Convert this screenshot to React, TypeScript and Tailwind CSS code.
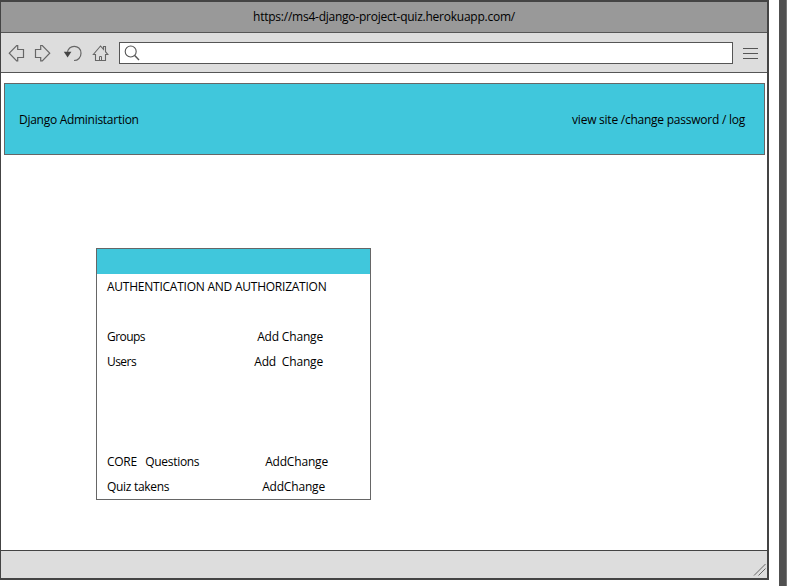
import React from "react";

const stroke = { fill: "none", stroke: "#666", strokeWidth: 1 };

function Row({ label, actions, pad }: { label: string; actions: string; pad: string }) {
  return (
    <div className={`flex h-[25px] items-center justify-between whitespace-pre pl-[10px] ${pad}`}>
      <span className={label.length < 7 ? "tracking-[-0.55px]" : "tracking-[-0.3px]"}>{label}</span>
      <span className="tracking-[-0.18px]">{actions}</span>
    </div>
  );
}

function Toolbar() {
  return (
    <div className="flex h-10 shrink-0 items-center border-b border-[#555] bg-[#ddd]">
      <svg className="h-[39px] w-[118px] shrink-0" viewBox="1 33 118 39" {...stroke}>
        <path d="M9.3 53.2 L16.7 45.5 H17.7 V49.5 H23.5 V57.5 H17.7 V60.8 H16.7 Z" strokeWidth="1.2" />
        <path d="M49.7 53.2 L42.3 45.5 H40.7 V49.5 H35.5 V57.5 H40.7 V60.8 H42.3 Z" strokeWidth="1.2" />
        <path d="M67.5 53.2 C67.5 44 81 44 81 53.2 C81 57.5 78 60.5 74 60.5" strokeWidth="1.2" />
        <path d="M63.8 51.8 H71.4 L67.6 57.4 Z" fill="#444" stroke="none" />
        <path d="M93.3 54.5 L100.5 46 L103.5 49.4 V46.5 H105.5 V51.7 L107.8 54.5 H105.5 V60.5 H95.5 V54.5 Z" strokeWidth="1.1" />
        <path d="M99.5 60.5 V56.5 H101.5 V60.5" />
      </svg>
      <div className="flex h-[22px] w-[614px] items-center border border-[#555] bg-white pl-[4px]">
        <svg className="size-[18px]" viewBox="0 0 18 18" {...stroke} stroke="#555">
          <circle cx="6.7" cy="7.5" r="5.5" strokeWidth="1.1" />
          <path d="M10.7 11.5 L15 16" strokeWidth="1.4" />
        </svg>
      </div>
      <div className="ml-[10px] mt-[2px] flex w-[15px] flex-col gap-1">
        <div className="h-px bg-[#555]" />
        <div className="h-px bg-[#555]" />
        <div className="h-px bg-[#555]" />
      </div>
    </div>
  );
}

export default function App() {
  return (
    <div className="flex h-[586px] w-[787px] justify-between overflow-hidden bg-white font-['Open_Sans','Noto_Sans',sans-serif] text-[12px] leading-[16px] tracking-[-0.24px] text-black">
      <div className="flex h-[580px] w-[769px] flex-col border-2 border-l border-[#444]">
        <div className="flex h-[31px] shrink-0 items-center justify-center border-b border-[#555] bg-[#999]">
          <span>https://ms4-django-project-quiz.herokuapp.com/</span>
        </div>
        <Toolbar />
        <main className="flex-1 pl-[3px] pt-[10px]">
          <header className="flex h-[72px] w-[761px] items-center justify-between border border-[#666] bg-[#40c7dc] pl-[14px] pr-[19px] pt-[2px]">
            <span className="tracking-[-0.28px]">Django Administartion</span>
            <span>view site /change password / log</span>
          </header>
          <section className="ml-[92px] mt-[93px] h-[252px] w-[275px] border border-[#666]">
            <div className="h-[25px] bg-[#40c7dc]" />
            <div className="flex h-[25px] items-center pl-[10px]">
              <span>AUTHENTICATION AND AUTHORIZATION</span>
            </div>
            <div className="h-[25px]" />
            <Row label="Groups" actions="Add Change" pad="pr-[47px]" />
            <Row label="Users" actions="Add  Change" pad="pr-[47px]" />
            <div className="h-[75px]" />
            <Row label="CORE   Questions" actions="AddChange" pad="pr-[42px]" />
            <Row label="Quiz takens" actions="AddChange" pad="pr-[45px]" />
          </section>
        </main>
        <footer className="flex h-[28px] shrink-0 items-end justify-end border-t border-[#444] bg-[#ddd]">
          <svg className="mb-[2px] mr-[1px] size-[13px]" viewBox="0 0 13 13" {...stroke}>
            <path d="M1 12.5 L12.5 1 M5.5 12.5 L12.5 5.5" />
          </svg>
        </footer>
      </div>
      <div className="w-2 border-r border-[#777] bg-[#505050]" />
    </div>
  );
}
